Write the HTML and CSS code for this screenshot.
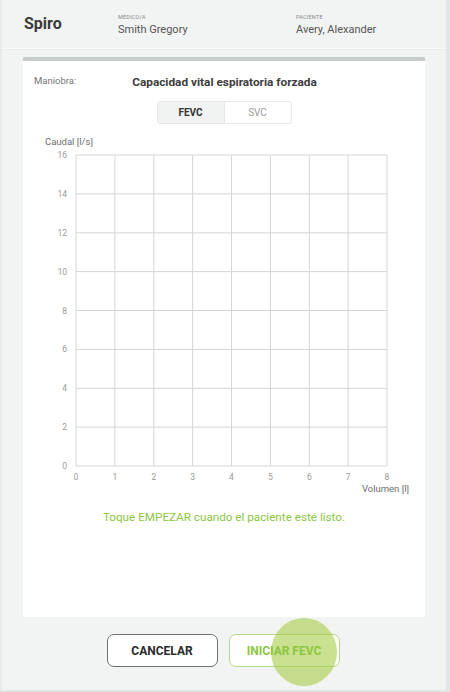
FILE: index.html
```html
<!DOCTYPE html>
<html lang="es">
<head>
<meta charset="utf-8">
<title>Spiro</title>
<link rel="stylesheet" href="styles.css">
</head>
<body>
<div class="dialog">
  <header class="header">
    <div class="brand">Spiro</div>
    <div class="field field-doc">
      <div class="field-label">MÉDICO/A</div>
      <div class="field-value">Smith Gregory</div>
    </div>
    <div class="field field-pat">
      <div class="field-label">PACIENTE</div>
      <div class="field-value">Avery, Alexander</div>
    </div>
  </header>

  <section class="card">
    <div class="maneuver-row">
      <span class="maneuver-label">Maniobra:</span>
      <span class="maneuver-title">Capacidad vital espiratoria forzada</span>
    </div>
    <div class="segmented">
      <div class="seg seg-active">FEVC</div>
      <div class="seg">SVC</div>
    </div>

    <svg class="chart" width="402" height="366" viewBox="0 0 402 366" xmlns="http://www.w3.org/2000/svg">
      <text x="22" y="12" class="axis-title">Caudal [l/s]</text>
      <g class="grid">
        <line x1="53" y1="22" x2="364" y2="22"/>
        <line x1="53" y1="60.9" x2="364" y2="60.9"/>
        <line x1="53" y1="99.8" x2="364" y2="99.8"/>
        <line x1="53" y1="138.6" x2="364" y2="138.6"/>
        <line x1="53" y1="177.5" x2="364" y2="177.5"/>
        <line x1="53" y1="216.4" x2="364" y2="216.4"/>
        <line x1="53" y1="255.3" x2="364" y2="255.3"/>
        <line x1="53" y1="294.1" x2="364" y2="294.1"/>
        <line x1="53" y1="333" x2="364" y2="333"/>
        <line x1="53" y1="22" x2="53" y2="333"/>
        <line x1="91.9" y1="22" x2="91.9" y2="333"/>
        <line x1="130.8" y1="22" x2="130.8" y2="333"/>
        <line x1="169.6" y1="22" x2="169.6" y2="333"/>
        <line x1="208.5" y1="22" x2="208.5" y2="333"/>
        <line x1="247.4" y1="22" x2="247.4" y2="333"/>
        <line x1="286.3" y1="22" x2="286.3" y2="333"/>
        <line x1="325.1" y1="22" x2="325.1" y2="333"/>
        <line x1="364" y1="22" x2="364" y2="333"/>
      </g>
      <g class="ylabels">
        <text x="44" y="25">16</text>
        <text x="44" y="64">14</text>
        <text x="44" y="103">12</text>
        <text x="44" y="142">10</text>
        <text x="44" y="181">8</text>
        <text x="44" y="219">6</text>
        <text x="44" y="258">4</text>
        <text x="44" y="297">2</text>
        <text x="44" y="336">0</text>
      </g>
      <g class="xlabels">
        <text x="53" y="347">0</text>
        <text x="91.9" y="347">1</text>
        <text x="130.8" y="347">2</text>
        <text x="169.6" y="347">3</text>
        <text x="208.5" y="347">4</text>
        <text x="247.4" y="347">5</text>
        <text x="286.3" y="347">6</text>
        <text x="325.1" y="347">7</text>
        <text x="364" y="347">8</text>
      </g>
      <text x="386" y="359" class="axis-title axis-x">Volumen [l]</text>
    </svg>

    <p class="hint">Toque EMPEZAR cuando el paciente esté listo.</p>
  </section>

  <div class="actions">
    <button class="btn btn-cancel">CANCELAR</button>
    <button class="btn btn-start"><span class="ripple"></span><span class="btn-text">INICIAR FEVC</span></button>
  </div>
</div>
</body>
</html>
```

FILE: styles.css
```css
* { box-sizing: border-box; }

html, body {
  margin: 0;
  padding: 0;
}

body {
  width: 450px;
  height: 692px;
  background: #e4e5e8;
  font-family: Roboto, "Liberation Sans", Arial, sans-serif;
  color: #333;
  overflow: hidden;
}

.dialog {
  width: 446px;
  height: 690px;
  background: #f2f3f3;
  border-left: 2px solid #e9eaec;
  display: flex;
  flex-direction: column;
}

.header {
  height: 49px;
  border-bottom: 1px solid #fafbfb;
  box-shadow: 0 1px 0 #e9ebeb;
  display: flex;
  align-items: center;
  padding-left: 22px;
  flex-shrink: 0;
}

.brand {
  font-size: 16px;
  font-weight: 700;
  color: #3a3a3a;
  width: 94px;
  margin-top: -2px;
}

.field {
  display: flex;
  flex-direction: column;
  gap: 3px;
  margin-top: 2px;
}

.field-doc { width: 178px; }

.field-label {
  font-size: 5.5px;
  color: #8a8a8a;
  letter-spacing: 0.2px;
}

.field-value {
  font-size: 11px;
  color: #555;
}

.card {
  margin: 8px 0 0 21px;
  width: 402px;
  height: 560px;
  background: #fff;
  border-top: 4px solid #c6cdc9;
  border-radius: 2px 2px 0 0;
  display: flex;
  flex-direction: column;
  align-items: center;
  flex-shrink: 0;
}

.maneuver-row {
  width: 100%;
  position: relative;
  height: 20px;
  margin-top: 11px;
  display: flex;
  justify-content: center;
  align-items: center;
}

.maneuver-label {
  position: absolute;
  left: 11px;
  top: 3px;
  font-size: 9.5px;
  color: #777;
}

.maneuver-title {
  font-size: 11.8px;
  font-weight: 700;
  color: #3d3d3d;
  margin-left: 1px;
}

.segmented {
  margin-top: 9px;
  display: flex;
  border: 1px solid #e7e8e8;
  border-radius: 3px;
  height: 23px;
  overflow: hidden;
}

.seg {
  width: 66px;
  display: flex;
  align-items: center;
  justify-content: center;
  font-size: 10px;
  color: #9a9a9a;
  background: #fff;
}

.seg-active {
  background: #f1f2f2;
  color: #333;
  font-weight: 700;
  width: 67px;
  border-right: 1px solid #e7e8e8;
}

.chart {
  display: block;
  margin-top: 9px;
  align-self: flex-start;
}

.grid line {
  stroke: #d6d6d6;
  stroke-width: 1;
}

.ylabels text {
  font-size: 8.5px;
  fill: #9a9a9a;
  text-anchor: end;
}

.xlabels text {
  font-size: 8.5px;
  fill: #9a9a9a;
  text-anchor: middle;
}

.axis-title {
  font-size: 9.5px;
  fill: #6f6f6f;
}

.axis-x {
  text-anchor: end;
}

.hint {
  margin: 11px 0 0;
  font-size: 11.7px;
  color: #8cc63f;
}

.actions {
  display: flex;
  justify-content: center;
  gap: 11px;
  margin-top: 17px;
  padding-right: 2px;
}

.btn {
  width: 111px;
  height: 33px;
  border-radius: 7px;
  background: #fff;
  font-family: Roboto, "Liberation Sans", Arial, sans-serif;
  font-size: 12px;
  font-weight: 700;
  padding: 0;
  display: flex;
  align-items: center;
  justify-content: center;
}

.btn-cancel {
  border: 1px solid #6f6f6f;
  color: #2b2b2b;
}

.btn-start {
  border: 1px solid #b7d98a;
  color: #8cc63f;
  position: relative;
  overflow: visible;
}

.ripple {
  position: absolute;
  left: 41px;
  top: -17px;
  width: 66px;
  height: 68px;
  border-radius: 50%;
  background: rgba(165, 205, 70, 0.6);
}

.btn-text {
  position: relative;
}
```
